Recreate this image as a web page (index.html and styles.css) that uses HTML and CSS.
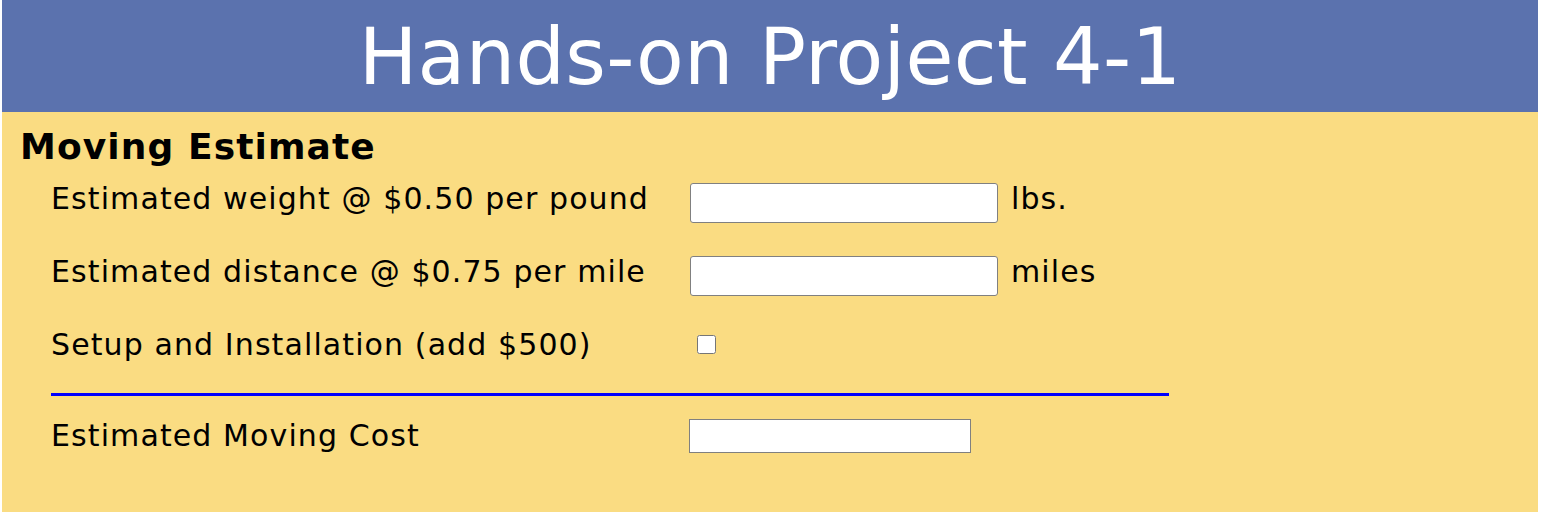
FILE: index.html
```html
<!DOCTYPE html>
<html lang="en">
<head>
  <meta charset="UTF-8" />
  <title>Hands-on Project 4-1</title>
  <meta name="viewport" content="width=device-width, initial-scale=1.0" />
  <link rel="stylesheet" href="styles.css">
</head>
<body>
  <div class="page">
    <header>
      <h1>Hands-on Project 4-1</h1>
    </header>

    <article>
      <h2>Moving Estimate</h2>
      <form>
        <div class="row">
          <label for="lbsBox">Estimated weight @ $0.50 per pound</label>
          <input type="text" id="lbsBox" />
          <span class="unit">lbs.</span>
        </div>
        <div class="row">
          <label for="milesBox">Estimated distance @ $0.75 per mile</label>
          <input type="text" id="milesBox" />
          <span class="unit">miles</span>
        </div>
        <div class="row">
          <label for="setupBox">Setup and Installation (add $500)</label>
          <input type="checkbox" id="setupBox" />
        </div>
        <hr />
        <div class="row total-row">
          <label for="estimate">Estimated Moving Cost</label>
          <input type="text" id="estimate" class="total" readonly />
        </div>
      </form>
    </article>
  </div>
</body>
</html>
```

FILE: styles.css
```css
body {
  margin: 0;
  font-family: Verdana, "DejaVu Sans", sans-serif;
  color: #000;
}
.page {
  width: 1536px;
  height: 512px;
  margin-left: 2px;
  background-color: #fadc82;
}
header {
  background-color: #5b72ae;
  height: 112px;
  text-align: center;
}
h1 {
  margin: 0;
  padding-top: 3px;
  color: #fff;
  font-weight: normal;
  font-size: 78px;
  line-height: 109px;
  letter-spacing: 0.3px;
}
article {
  padding: 0 18px;
}
h2 {
  margin: 0;
  padding-top: 16px;
  font-size: 36px;
  line-height: 38px;
  letter-spacing: 1.1px;
}
form {
  padding-left: 31px;
}
.row {
  display: grid;
  grid-template-columns: 639px auto auto;
  justify-content: start;
  align-items: center;
  height: 73px;
  font-size: 30px;
  letter-spacing: 1.1px;
}
.row label,
.unit {
  padding-bottom: 9px;
}
.total-row label {
  padding-bottom: 0;
}
.row input[type="text"] {
  width: 308px;
  height: 40px;
  box-sizing: border-box;
  border: 1px solid #808080;
  border-radius: 3px;
  font-size: 18px;
  margin: 0;
}
.row input.total {
  width: 282px;
  height: 34px;
  margin-left: -1px;
  border-radius: 0;
}
.row input[type="checkbox"] {
  width: 19px;
  height: 19px;
  margin: 0 0 9px 7px;
}
.unit {
  margin-left: 13px;
}
hr {
  width: 1118px;
  margin: 8px 0 3px 0;
  border: 0;
  border-top: 3px solid #0000ff;
}
```
